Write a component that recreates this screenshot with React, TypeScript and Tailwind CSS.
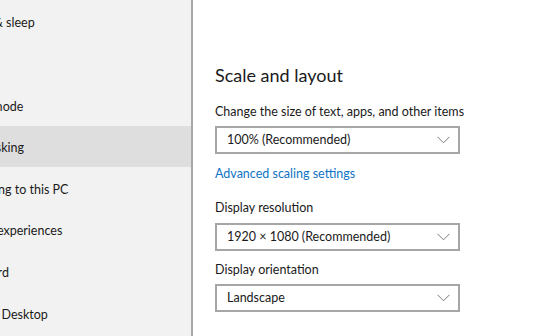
import React from 'react';

const navItems = [
  'Power & sleep',
  'Storage',
  'Tablet mode',
  'Multitasking',
  'Projecting to this PC',
  'Shared experiences',
  'Clipboard',
  'Remote Desktop',
];

const Chevron = () => (
  <svg width="13" height="8" viewBox="0 0 13 8" className="text-[#7a7a7a]">
    <path d="M0.5 0.8 L6.5 6.8 L12.5 0.8" fill="none" stroke="currentColor" strokeWidth="1" />
  </svg>
);

const Dropdown: React.FC<{ value: string }> = ({ value }) => (
  <div className="flex h-[28px] w-[245px] items-center justify-between border-2 border-[#a6a6a6] bg-white pl-[10px] pr-[8px] text-[12.5px] text-[#1a1a1a]">
    <span>{value}</span>
    <Chevron />
  </div>
);

export default function App() {
  return (
    <div
      className="flex h-[336px] w-[560px] overflow-hidden bg-white"
      style={{ fontFamily: 'Lato, "Noto Sans", sans-serif' }}
    >
      <aside className="flex w-[193px] shrink-0 flex-col overflow-hidden border-r-2 border-[#a8a8a8] bg-[#f2f2f2] pt-[1px]">
        {navItems.map((item) => (
          <div
            key={item}
            className={`flex h-[41.6px] shrink-0 items-center whitespace-nowrap pt-[4px] text-[12.5px] text-[#1a1a1a] ${
              item === 'Multitasking' ? 'bg-[#dedede]' : ''
            }`}
          >
            <span className="ml-[-44px]">{item}</span>
          </div>
        ))}
      </aside>
      <main className="flex flex-col pt-[63px]">
        <div className="ml-[22px] flex flex-col">
          <h2 className="text-[18px] font-normal leading-[24px] text-[#1a1a1a]">Scale and layout</h2>
          <p className="mt-[16px] text-[12.5px] leading-[18px] text-[#1a1a1a]">Change the size of text, apps, and other items</p>
          <div className="mt-[5px]">
            <Dropdown value="100% (Recommended)" />
          </div>
          <a className="mt-[11px] text-[12.5px] leading-[18px] text-[#0f73c4]">Advanced scaling settings</a>
          <p className="mt-[16px] text-[12.5px] leading-[18px] text-[#1a1a1a]">Display resolution</p>
          <div className="mt-[6px]">
            <Dropdown value="1920 × 1080 (Recommended)" />
          </div>
          <p className="mt-[10px] text-[12.5px] leading-[18px] text-[#1a1a1a]">Display orientation</p>
          <div className="mt-[5px]">
            <Dropdown value="Landscape" />
          </div>
        </div>
      </main>
    </div>
  );
}
